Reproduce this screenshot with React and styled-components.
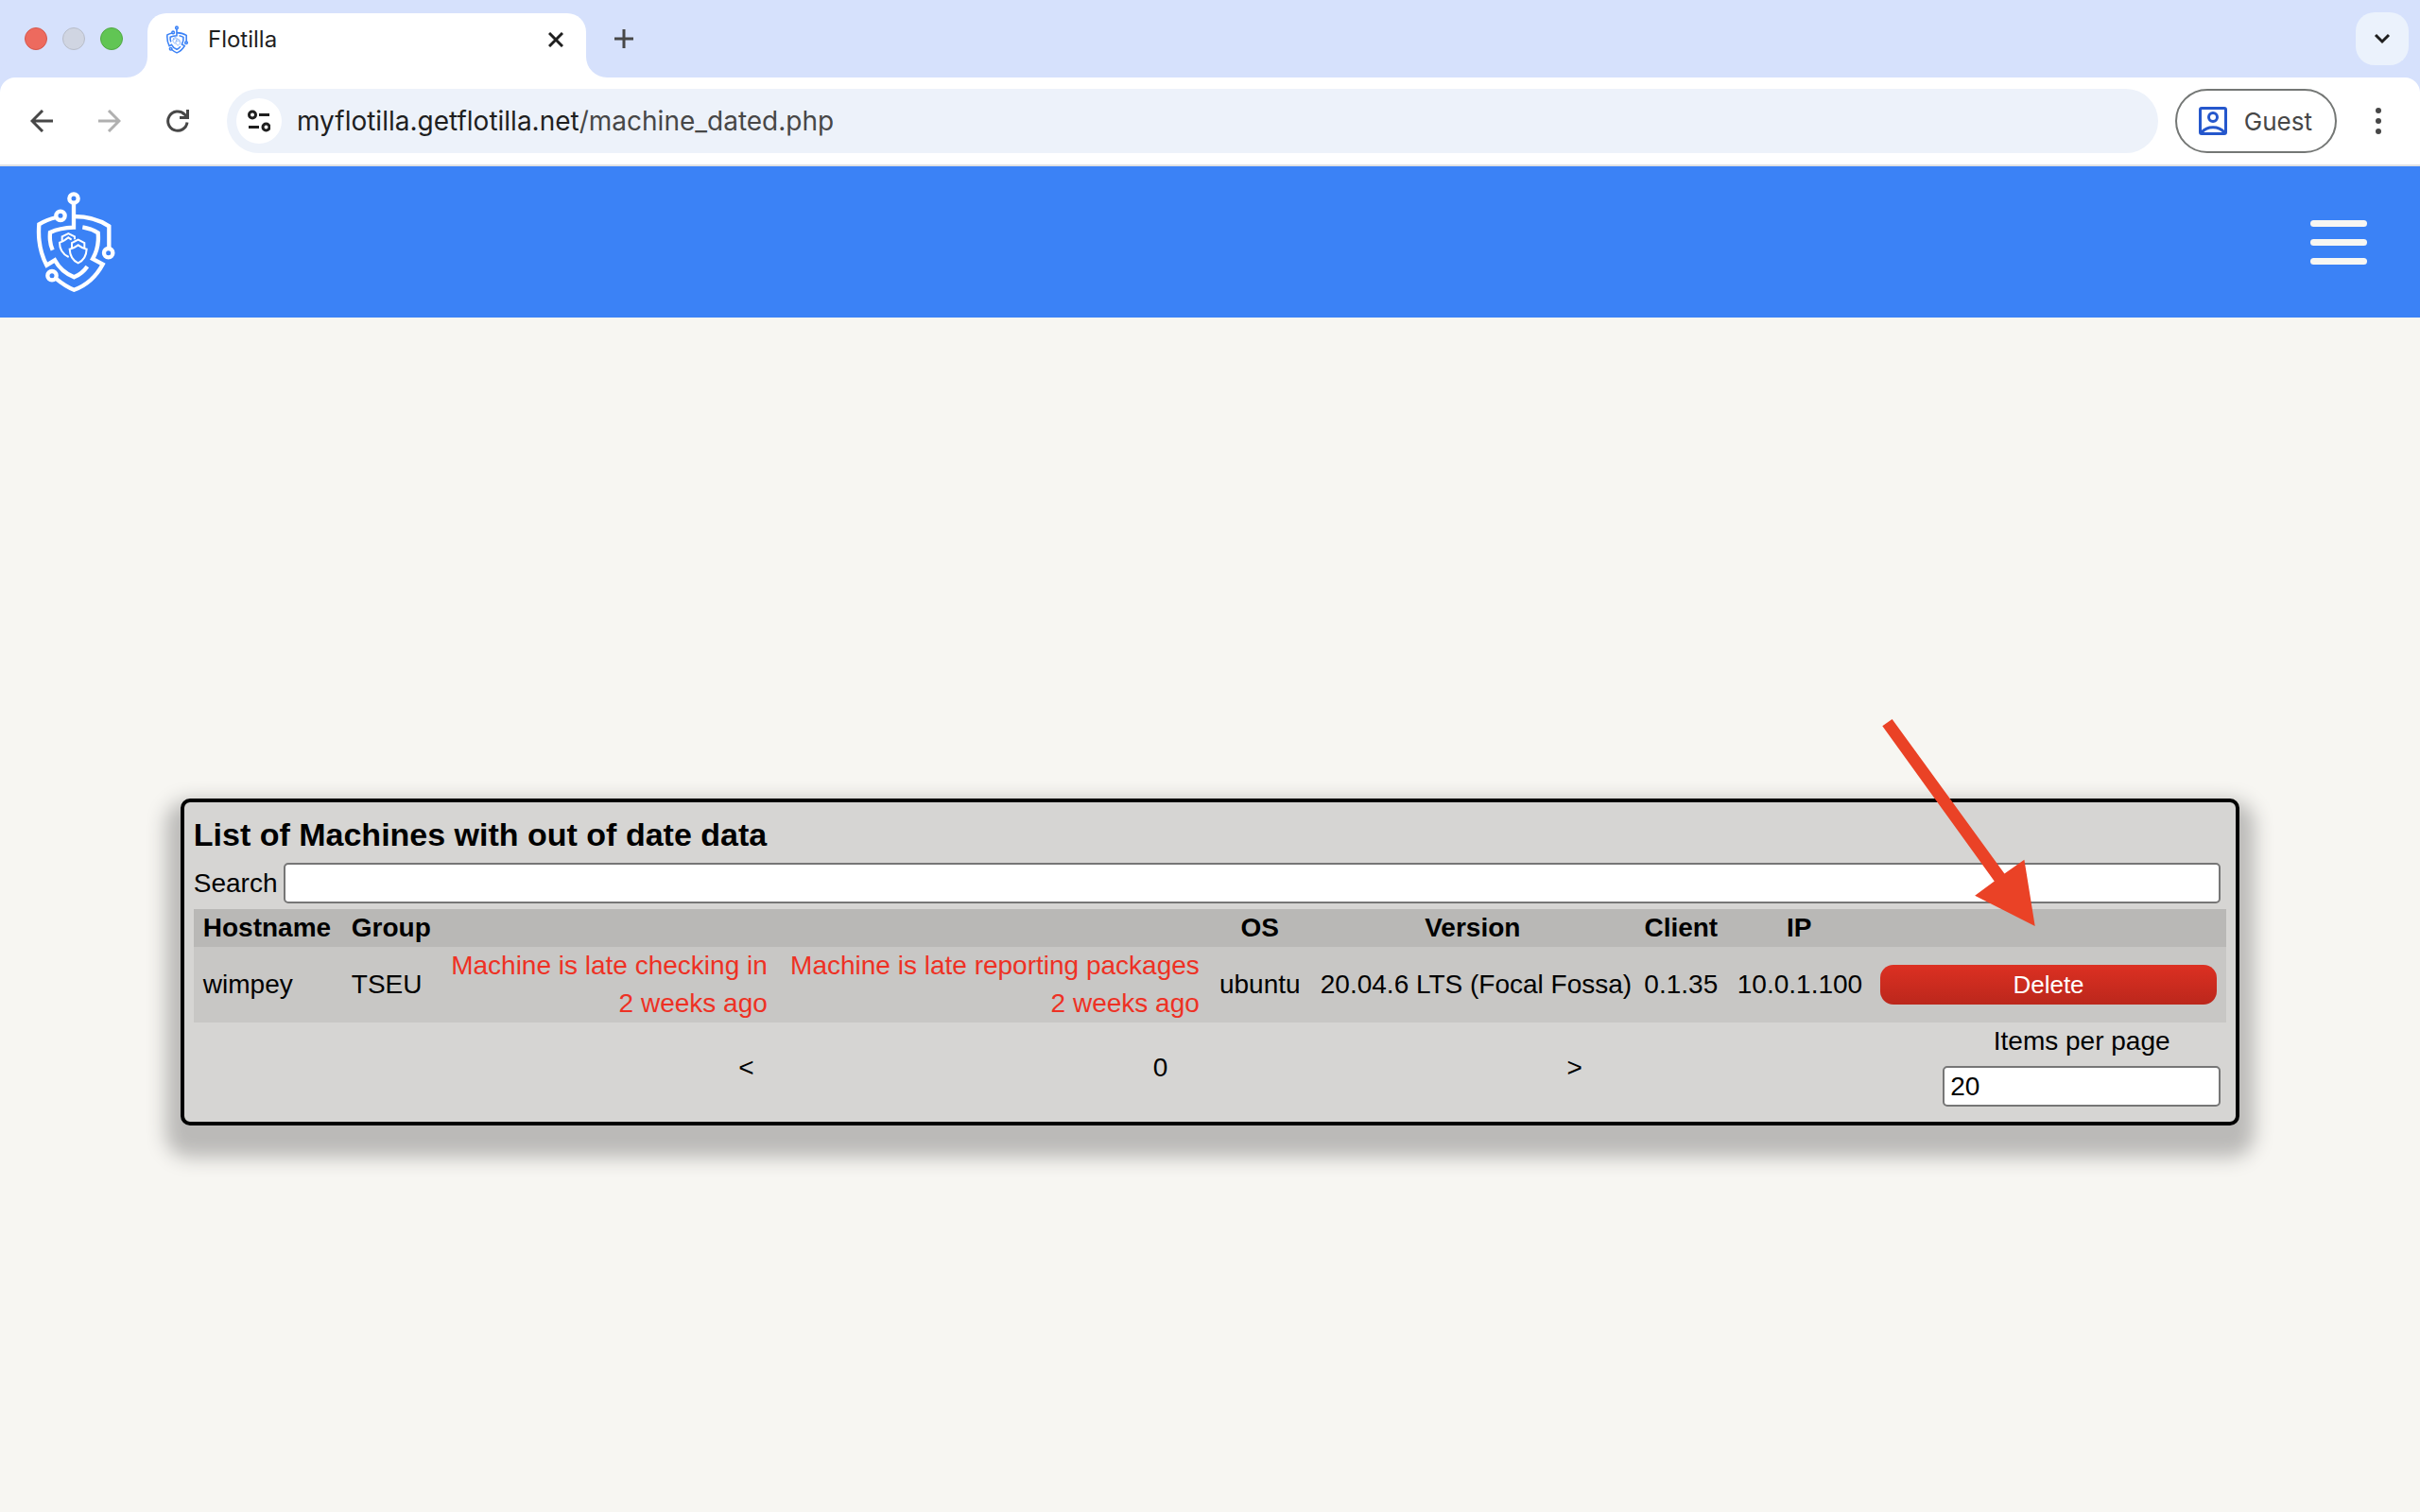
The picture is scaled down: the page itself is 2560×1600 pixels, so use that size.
import React from 'react';
import styled, { createGlobalStyle } from 'styled-components';

const GlobalStyle = createGlobalStyle`
  * {
    box-sizing: border-box;
  }

  body {
    margin: 0;
    background: #f7f6f2;
    color: #000;
    font-family: 'Liberation Sans', Arial, sans-serif;
    font-size: 28px;
    line-height: 40px;
  }

  button {
    padding: 0;
    border: 0;
    background: transparent;
    font-family: inherit;
    cursor: pointer;
  }
`;

// the last column has no width, it takes whatever the others leave
const columns = [
  { label: 'Hostname', align: 'left', width: 157 },
  { label: 'Group', align: 'left', width: 103 },
  { label: '', align: 'right', width: 357 },
  { label: '', align: 'right', width: 457 },
  { label: 'OS', width: 108 },
  { label: 'Version', width: 342 },
  { label: 'Client', width: 99 },
  { label: 'IP', width: 151 },
  { label: '' },
];

const machines = [
  {
    hostname: 'wimpey',
    group: 'TSEU',
    lastSeen: '2 weeks ago',
    lastPackages: '2 weeks ago',
    os: 'ubuntu',
    version: '20.04.6 LTS (Focal Fossa)',
    client: '0.1.35',
    ip: '10.0.1.100',
  },
];

const FlotillaLogo = ({ width, height, stroke = 13 }) => (
  <svg
    width={width}
    height={height}
    viewBox="54 36 252 324"
    fill="none"
    stroke="currentColor"
    strokeWidth={stroke}
    aria-hidden="true"
  >
    <circle cx="174" cy="60" r="14" />
    <circle cx="132" cy="115" r="14" />
    <circle cx="284" cy="233" r="14" />
    <circle cx="105" cy="305" r="14" />
    <path d="M174 74V152C144 153 120 158 99 168C97 190 98 205 107 224" />
    <path d="M174 117C218 117 256 128 286 148V218" />
    <path d="M119 120C98 125 80 132 64 142C60 190 68 234 88 272L114 256C128 282 150 300 175 310C192 303 206 292 217 276" />
    <path d="M202 151C220 154 236 160 251 169C254 198 249 226 234 252L266 269C246 306 214 336 175 350C154 342 134 328 116 313" />
    <g strokeWidth="6">
      <path d="M158 246C138 236 129 220 129 200C140 197 149 191 157 184L167 191M137 196V181L157 171L177 181V190" />
      <path d="M188 208C180 214 171 219 161 221C162 242 170 257 188 265C206 257 214 242 215 221C205 219 196 214 188 208Z" />
      <path d="M168 216V201L188 191L208 201V216" />
    </g>
  </svg>
);

const TabShape = () => (
  <svg width="22" height="22" viewBox="0 0 22 22" aria-hidden="true">
    <path d="M22 0V22H0A22 22 0 0 0 22 0Z" fill="#fff" />
  </svg>
);

const BrowserChrome = () => (
  <header>
    <TabStrip>
      <WindowButtons>
        <WindowButton $color="#ed6a5e" $edge="#d5574c" aria-label="Close window" />
        <WindowButton $color="#d0d5e2" $edge="#b8bdc9" aria-label="Minimize window" />
        <WindowButton $color="#61c554" $edge="#51a844" aria-label="Zoom window" />
      </WindowButtons>
      <TabCurve>
        <TabShape />
      </TabCurve>
      <Tab>
        <FlotillaLogo width={23} height={30} stroke={17} />
        <TabTitle>Flotilla</TabTitle>
        <IconButton aria-label="Close tab">
          <svg width="16" height="16" viewBox="0 0 16 16" stroke="#1f1f1f" strokeWidth="3">
            <path d="M1 1L15 15M15 1L1 15" />
          </svg>
        </IconButton>
      </Tab>
      <TabCurve $flip>
        <TabShape />
      </TabCurve>
      <NewTabButton aria-label="New tab">
        <svg width="20" height="20" viewBox="0 0 20 20" stroke="#474747" strokeWidth="3">
          <path d="M10 0V20M0 10H20" />
        </svg>
      </NewTabButton>
      <TabSearchButton aria-label="Search tabs">
        <svg width="18" height="12" viewBox="0 0 18 12" fill="none" stroke="#1f1f1f" strokeWidth="3">
          <path d="M2 2L9 9L16 2" />
        </svg>
      </TabSearchButton>
    </TabStrip>
    <Toolbar>
      <NavButton aria-label="Back">
        <svg width="24" height="24" viewBox="0 0 24 24" fill="none" stroke="#474747" strokeWidth="3">
          <path d="M24 12H2M13 1L2 12L13 23" />
        </svg>
      </NavButton>
      <NavButton aria-label="Forward">
        <svg width="24" height="24" viewBox="0 0 24 24" fill="none" stroke="#b0b0b0" strokeWidth="3">
          <path d="M0 12H22M11 1L22 12L11 23" />
        </svg>
      </NavButton>
      <NavButton aria-label="Reload">
        <svg width="24" height="24" viewBox="0 0 24 24" fill="none" stroke="#474747" strokeWidth="3">
          <path d="M22 13.5A10.2 10.2 0 1 1 19 4.8L22 8M22.5 0V8.5H14" />
        </svg>
      </NavButton>
      <AddressBar>
        <SiteInfoButton aria-label="View site information">
          <svg width="24" height="24" viewBox="0 0 24 24" fill="none" stroke="#1f1f1f" strokeWidth="3">
            <circle cx="5" cy="5.5" r="3.5" />
            <circle cx="19.5" cy="18.5" r="3.5" />
            <path d="M12 5.500H23M1 18.500H12" />
          </svg>
        </SiteInfoButton>
        <Url>
          myflotilla.getflotilla.net<UrlPath>/machine_dated.php</UrlPath>
        </Url>
      </AddressBar>
      <ProfileButton>
        <svg width="30" height="30" viewBox="0 0 30 30" fill="none" stroke="#2557cc" strokeWidth="3">
          <rect x="1.5" y="1.5" width="27" height="27" rx="1.5" />
          <circle cx="15" cy="11" r="4.5" />
          <path d="M3 27C9 20 21 20 27 27" />
        </svg>
        Guest
      </ProfileButton>
      <MenuButton aria-label="Browser menu">
        <svg width="6" height="28" viewBox="0 0 6 28" fill="#474747">
          <circle cx="3" cy="3" r="3" />
          <circle cx="3" cy="14" r="3" />
          <circle cx="3" cy="25" r="3" />
        </svg>
      </MenuButton>
    </Toolbar>
  </header>
);

const MachineRow = ({ machine }) => (
  <tr>
    <Cell $align="left">{machine.hostname}</Cell>
    <Cell $align="left">{machine.group}</Cell>
    <Cell $align="right" $late>
      Machine is late checking in
      <br />
      {machine.lastSeen}
    </Cell>
    <Cell $align="right" $late>
      Machine is late reporting packages
      <br />
      {machine.lastPackages}
    </Cell>
    <Cell>{machine.os}</Cell>
    <Cell>{machine.version}</Cell>
    <Cell>{machine.client}</Cell>
    <Cell>{machine.ip}</Cell>
    <Cell>
      <DeleteButton type="button">Delete</DeleteButton>
    </Cell>
  </tr>
);

const App = () => {
  return (
    <Page>
      <GlobalStyle />
      <BrowserChrome />
      <SiteHeader>
        <LogoLink href="#" aria-label="Flotilla">
          <FlotillaLogo width={84} height={108} />
        </LogoLink>
        <Hamburger type="button" aria-label="Menu">
          <HamburgerBar />
          <HamburgerBar />
          <HamburgerBar />
        </Hamburger>
      </SiteHeader>
      <Main>
        <Card>
          <Title>List of Machines with out of date data</Title>
          <SearchRow>
            <label htmlFor="search">Search</label>
            <TextInput id="search" type="text" />
          </SearchRow>
          <MachineTable>
            <thead>
              <tr>
                {columns.map((column, index) => (
                  <HeadCell key={index} $align={column.align} $width={column.width}>
                    {column.label}
                  </HeadCell>
                ))}
              </tr>
            </thead>
            <tbody>
              {machines.map((machine) => (
                <MachineRow key={machine.hostname} machine={machine} />
              ))}
            </tbody>
          </MachineTable>
          <Pager>
            <PageButton type="button">&lt;</PageButton>
            <PageNumber>0</PageNumber>
            <PageButton type="button">&gt;</PageButton>
            <PageSize>
              <label htmlFor="items">Items per page</label>
              <TextInput id="items" type="text" defaultValue="20" />
            </PageSize>
          </Pager>
          <Pointer width="162" height="219" viewBox="94 63 485 658" aria-hidden="true">
            <path d="M94 85L125 63L482 554L545 510L579 721L388 624L450 578Z" fill="#ea4226" />
          </Pointer>
        </Card>
      </Main>
    </Page>
  );
};

const Page = styled.div`
  display: flex;
  flex-direction: column;
  min-height: 100vh;
`;

const TabStrip = styled.div`
  display: flex;
  align-items: flex-end;
  height: 82px;
  padding: 0 12px 0 26px;
  background: #d6e1fc;
`;

const WindowButtons = styled.div`
  display: flex;
  gap: 16px;
  align-self: center;
`;

const WindowButton = styled.button`
  width: 24px;
  height: 24px;
  border: 1px solid ${({ $edge }) => $edge};
  border-radius: 50%;
  background: ${({ $color }) => $color};
`;

const TabCurve = styled.div`
  display: flex;
  margin-left: ${({ $flip }) => ($flip ? '0' : '4px')};
  transform: ${({ $flip }) => ($flip ? 'scaleX(-1)' : 'none')};
`;

const Tab = styled.div`
  display: flex;
  align-items: center;
  width: 464px;
  height: 68px;
  padding: 0 24px 12px 20px;
  border-radius: 20px 20px 0 0;
  background: #fff;
  color: #3b82f6;
`;

const TabTitle = styled.span`
  flex: 1;
  margin-left: 21px;
  color: #1f1f1f;
  font-family: Inter, sans-serif;
  font-size: 24px;
`;

const IconButton = styled.button`
  display: flex;
  align-items: center;
  justify-content: center;
`;

const NewTabButton = styled(IconButton)`
  align-self: center;
  margin-left: 8px;
`;

const TabSearchButton = styled(IconButton)`
  align-self: center;
  width: 56px;
  height: 56px;
  margin-left: auto;
  border-radius: 20px;
  background: #ebf2fc;
`;

const Toolbar = styled.div`
  display: flex;
  align-items: center;
  height: 94px;
  padding: 0 41px 0 32px;
  border-bottom: 2px solid #dfe1e3;
  border-radius: 16px 16px 0 0;
  background: #fff;
  box-shadow: 0 -20px 0 0 #d6e1fc;
`;

const NavButton = styled(IconButton)`
  margin-right: 48px;

  &:nth-of-type(3) {
    margin-right: 40px;
  }
`;

const AddressBar = styled.div`
  display: flex;
  flex: 1;
  align-items: center;
  height: 68px;
  padding-left: 10px;
  border-radius: 34px;
  background: #edf2fa;
`;

const SiteInfoButton = styled(IconButton)`
  width: 48px;
  height: 48px;
  border-radius: 50%;
  background: #fff;
`;

const Url = styled.span`
  margin-left: 16px;
  color: #1f1f1f;
  font-family: Inter, sans-serif;
  font-size: 28px;
`;

const UrlPath = styled.span`
  color: #474747;
`;

const ProfileButton = styled.button`
  display: flex;
  align-items: center;
  gap: 18px;
  height: 68px;
  margin-left: 18px;
  padding: 0 24px 0 23px;
  border: 2px solid #747775;
  border-radius: 34px;
  color: #474747;
  font-family: Inter, sans-serif;
  font-size: 26px;
`;

const MenuButton = styled(IconButton)`
  margin-left: 41px;
`;

const SiteHeader = styled.div`
  display: flex;
  align-items: center;
  justify-content: space-between;
  height: 160px;
  padding: 0 56px 0 38px;
  background: #3b82f6;
`;

const LogoLink = styled.a`
  display: flex;
  color: #fff;
`;

const Hamburger = styled.button`
  display: flex;
  flex-direction: column;
  gap: 13px;
`;

const HamburgerBar = styled.span`
  width: 60px;
  height: 7px;
  border-radius: 4px;
  background: #f7f6f2;
`;

const Main = styled.main`
  display: flex;
  flex: 1;
  align-items: center;
  justify-content: center;
  padding-top: 100px;
`;

const Card = styled.section`
  position: relative;
  box-sizing: content-box;
  width: 84%;
  padding: 10px;
  border: 4px solid #000;
  border-radius: 10px;
  background: #d6d5d3;
  box-shadow: 0 18px 20px 16px #bbbab8;
`;

const Title = styled.h2`
  margin: 0;
  font-size: 34px;
  line-height: 48px;
`;

const SearchRow = styled.div`
  display: flex;
  align-items: center;
`;

const TextInput = styled.input`
  flex: 1;
  height: 43px;
  margin: 6px;
  padding: 2px 6px;
  border: 2px solid #767676;
  border-radius: 5px;
  background: #fff;
  font-family: inherit;
  font-size: 28px;
`;

const MachineTable = styled.table`
  width: 100%;
  table-layout: fixed;
  border-collapse: collapse;
  background: #c8c7c5;
  white-space: nowrap;
`;

const HeadCell = styled.th`
  width: ${({ $width }) => ($width ? `${$width}px` : 'auto')};
  height: 40px;
  padding: 0 10px;
  background: #b9b8b6;
  text-align: ${({ $align }) => $align || 'center'};
`;

const Cell = styled.td`
  padding: 0 10px;
  color: ${({ $late }) => ($late ? '#ee3124' : 'inherit')};
  text-align: ${({ $align }) => $align || 'center'};
`;

const DeleteButton = styled.button`
  display: block;
  width: 100%;
  height: 42px;
  border-radius: 14px;
  background: linear-gradient(#dc3022, #bb271c);
  color: #fff;
  font-size: 26px;
`;

const Pager = styled.div`
  display: grid;
  grid-template-columns: 204fr 204fr 204fr 219fr;
  align-items: center;
  padding-left: 17%;
`;

const PageButton = styled.button`
  justify-self: center;
  color: #000;
  font-size: 28px;
`;

const PageNumber = styled.span`
  text-align: center;
`;

const PageSize = styled.div`
  display: flex;
  flex-direction: column;
  justify-self: end;
  width: 306px;
  text-align: center;

  input {
    flex: none;
  }
`;

// red arrow lying over the card, pointing at the delete column
const Pointer = styled.svg`
  position: absolute;
  top: -88px;
  right: 212px;
  pointer-events: none;
`;

export default App;
